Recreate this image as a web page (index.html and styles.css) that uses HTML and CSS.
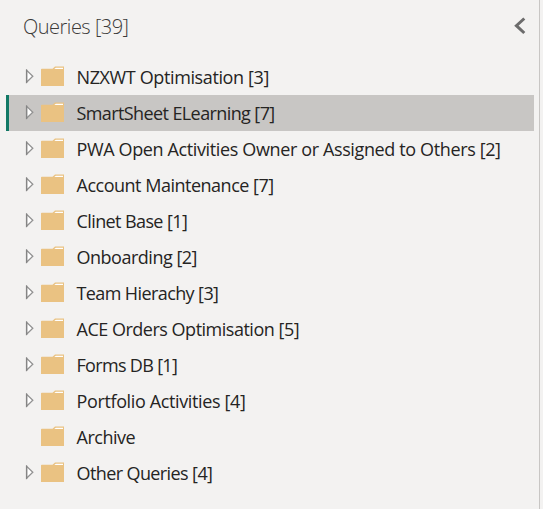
FILE: index.html
```
<!DOCTYPE html>
<html lang="en">
<head>
<meta charset="utf-8">
<title>Queries</title>
<link rel="stylesheet" href="styles.css">
</head>
<body>
<svg class="defs" width="0" height="0" aria-hidden="true">
  <symbol id="arrow" viewBox="0 0 9 15"><path d="M1.6 1.3V13.3L7.8 7.2Z" fill="#fff" stroke="#929292" stroke-width="1.3"/><path d="M1.6 .6V14" stroke="#858585" stroke-width="1.3"/></symbol>
  <symbol id="folder" viewBox="0 0 24 21"><path d="M0 3.5Q0 2.7.8 2.7H11.5L14 .4H23V20H0Z" fill="#eac282"/><path d="M14.8 1.8H22V3H13.3Z" fill="#fff"/></symbol>
</svg>
<aside class="pane">
  <header class="head"><h1 class="title">Queries [39]</h1>
    <svg class="collapse" width="12" height="18" viewBox="0 0 12 18"><path d="M10.3 1.5L2.4 8.7L10.3 16" fill="none" stroke="#6c6c6c" stroke-width="3"/></svg>
  </header>
  <ul class="list">
    <li class="row"><svg class="arrow"><use href="#arrow"/></svg><svg class="folder"><use href="#folder"/></svg><span class="name">NZXWT Optimisation [3]</span></li>
    <li class="row selected"><svg class="arrow"><use href="#arrow"/></svg><svg class="folder"><use href="#folder"/></svg><span class="name tight">SmartSheet ELearning [7]</span></li>
    <li class="row"><svg class="arrow"><use href="#arrow"/></svg><svg class="folder"><use href="#folder"/></svg><span class="name loose">PWA Open Activities Owner or Assigned to Others [2]</span></li>
    <li class="row"><svg class="arrow"><use href="#arrow"/></svg><svg class="folder"><use href="#folder"/></svg><span class="name snug">Account Maintenance [7]</span></li>
    <li class="row"><svg class="arrow"><use href="#arrow"/></svg><svg class="folder"><use href="#folder"/></svg><span class="name tight">Clinet Base [1]</span></li>
    <li class="row"><svg class="arrow"><use href="#arrow"/></svg><svg class="folder"><use href="#folder"/></svg><span class="name snug">Onboarding [2]</span></li>
    <li class="row"><svg class="arrow"><use href="#arrow"/></svg><svg class="folder"><use href="#folder"/></svg><span class="name tight">Team Hierachy [3]</span></li>
    <li class="row"><svg class="arrow"><use href="#arrow"/></svg><svg class="folder"><use href="#folder"/></svg><span class="name snug">ACE Orders Optimisation [5]</span></li>
    <li class="row"><svg class="arrow"><use href="#arrow"/></svg><svg class="folder"><use href="#folder"/></svg><span class="name tightest">Forms DB [1]</span></li>
    <li class="row"><svg class="arrow"><use href="#arrow"/></svg><svg class="folder"><use href="#folder"/></svg><span class="name loose">Portfolio Activities [4]</span></li>
    <li class="row"><span class="arrow"></span><svg class="folder"><use href="#folder"/></svg><span class="name snug">Archive</span></li>
    <li class="row"><svg class="arrow"><use href="#arrow"/></svg><svg class="folder"><use href="#folder"/></svg><span class="name tight">Other Queries [4]</span></li>
  </ul>
</aside>
</body>
</html>
```
FILE: styles.css
```
* { box-sizing: border-box; }
body { margin: 0; background: #f3f2f1; font-family: "Open Sans", "Noto Sans", sans-serif; color: #252423; }
.defs { display: block; }
.pane { width: 540px; height: 509px; border-right: 1px solid #c8c6c4; overflow: hidden; }
.head { height: 59px; padding: 9px 13px 0 23px; display: flex; justify-content: space-between; align-items: flex-start; }
.title { margin: 0; font-size: 20px; line-height: 36px; font-weight: 300; letter-spacing: -.5px; color: #3b3a39; white-space: nowrap; }
.collapse { margin-top: 8px; }
.list { list-style: none; margin: 0; padding: 0 5px 0 6px; }
.row { height: 36px; display: flex; align-items: flex-start; border-left: 3px solid transparent; }
.selected { background: #c8c6c4; border-left-color: #117865; }
.arrow { width: 9px; height: 15px; margin: 10px 6px 0 16px; flex: none; }
.folder { width: 24px; height: 21px; margin: 7px 12px 0 1px; flex: none; }
.name { margin-left: -.5px; font-size: 18px; line-height: 36px; letter-spacing: -.38px; white-space: nowrap; }
.loose { letter-spacing: -.37px; }
.snug { letter-spacing: -.49px; }
.tight { letter-spacing: -.6px; }
.tightest { letter-spacing: -.68px; }
```
